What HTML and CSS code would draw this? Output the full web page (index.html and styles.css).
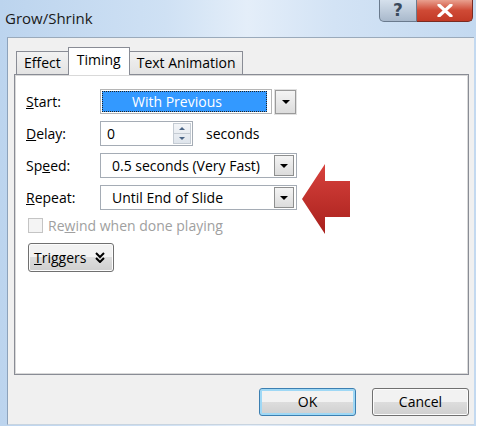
FILE: index.html
```html
<!DOCTYPE html>
<html lang="en">
    <head>
        <meta charset="UTF-8" />
        <title>Grow/Shrink</title>
        <link rel="stylesheet" href="styles.css">
    </head>
    <body>
        <div class="window">
            <div class="titlebar">
                <span class="title">Grow/Shrink</span>
                <div class="caption">
                    <div class="cap-help">?</div>
                    <div class="cap-close">
                        <svg width="16" height="13" viewBox="0 0 16 13">
                            <path d="M2 1 L14 12 M14 1 L2 12" stroke="#fff" stroke-width="3.2" stroke-linecap="round"/>
                        </svg>
                    </div>
                </div>
            </div>
            <div class="client">
                <div class="tabs">
                    <div class="tab">Effect</div>
                    <div class="tab active">Timing</div>
                    <div class="tab">Text Animation</div>
                </div>
                <div class="panel">
                    <div class="row">
                        <span class="label"><u>S</u>tart:</span>
                        <div class="combo focused">
                            <span class="value"><span class="sel">With Previous</span></span>
                            <span class="drop"><i></i></span>
                        </div>
                    </div>
                    <div class="row">
                        <span class="label"><u>D</u>elay:</span>
                        <div class="spin">
                            <span class="value">0</span>
                            <span class="arrows">
                                <span class="up"><i></i></span>
                                <span class="down"><i></i></span>
                            </span>
                        </div>
                        <span class="unit">seconds</span>
                    </div>
                    <div class="row">
                        <span class="label">Sp<u>e</u>ed:</span>
                        <div class="combo">
                            <span class="value">0.5 seconds (Very Fast)</span>
                            <span class="drop"><i></i></span>
                        </div>
                    </div>
                    <div class="row">
                        <span class="label"><u>R</u>epeat:</span>
                        <div class="combo">
                            <span class="value">Until End of Slide</span>
                            <span class="drop"><i></i></span>
                        </div>
                    </div>
                    <div class="check">
                        <span class="box"></span>
                        <span>Re<u>w</u>ind when done playing</span>
                    </div>
                    <div class="triggers">
                        <span><u>T</u>riggers</span>
                        <svg width="10" height="11" viewBox="0 0 10 11">
                            <path d="M1 1 L5 5 L9 1 M1 6 L5 10 L9 6" fill="none" stroke="#000" stroke-width="2"/>
                        </svg>
                    </div>

                    <svg class="arrow" width="50" height="70" viewBox="0 0 50 70">
                        <defs>
                            <linearGradient id="ar" x1="0" y1="0" x2="0" y2="1">
                                <stop offset="0" stop-color="#d8423d"/>
                                <stop offset="1" stop-color="#a8201c"/>
                            </linearGradient>
                        </defs>
                        <path d="M0 35 L23 0 L23 17 L48 17 L48 53 L23 53 L23 70 Z" fill="url(#ar)"/>
                    </svg>
                </div>
                <div class="footer">
                    <div class="btn default">OK</div>
                    <div class="btn">Cancel</div>
                </div>
            </div>
        </div>
    </body>
</html>
```

FILE: styles.css
```css
body {
    margin: 0;
    background: #fff;
    font-family: "Open Sans", "Noto Sans", sans-serif;
    font-size: 14px;
    color: #000;
}
.window {
    width: 476px;
    height: 426px;
    display: flex;
    flex-direction: column;
    background: linear-gradient(90deg, #bcd4ee 0%, #cfe1f4 35%, #e4eef9 52%, #d3e3f5 70%, #c3d9f0 100%);
}
.titlebar {
    height: 37px;
    display: flex;
    justify-content: space-between;
    flex-shrink: 0;
}
.title {
    font-size: 15px;
    padding: 8px 0 0 5px;
    color: #1a1a1a;
}
.caption {
    display: flex;
    height: 22px;
    margin-right: 3px;
}
.cap-help {
    width: 36px;
    border: 1px solid #6a7a8d;
    border-top: none;
    border-radius: 0 0 0 5px;
    background: linear-gradient(#d5e0ec, #a9b9cc);
    color: #3b4a5c;
    font: bold 17px "DejaVu Sans", sans-serif;
    text-align: center;
    line-height: 20px;
}
.cap-close {
    width: 55px;
    border: 1px solid #7a2b22;
    border-top: none;
    border-left: none;
    border-radius: 0 0 5px 0;
    background: linear-gradient(#e9a08f, #cf4a35 50%, #c23a26);
    display: flex;
    align-items: center;
    justify-content: center;
}
.client {
    flex: 1;
    margin: 0 2px 1px 7px;
    background: #f0f0f0;
    border-top: 1px solid #9aaabb;
    border-left: 1px solid #8da2bb;
    border-bottom: 1px solid #c8d4e0;
    padding: 9px 5px 0 6px;
    display: flex;
    flex-direction: column;
}
.tabs {
    display: flex;
    align-items: flex-end;
    padding-left: 2px;
    height: 27px;
    position: relative;
    z-index: 1;
}
.tab {
    height: 22px;
    line-height: 22px;
    padding: 0 7px;
    border: 1px solid #898c95;
    border-bottom: none;
    background: linear-gradient(#f2f2f2, #e3e3e3);
    margin-right: -1px;
}
.tab.active {
    height: 27px;
    line-height: 24px;
    background: #fff;
    padding: 0 8px;
    margin-bottom: -1px;
}
.panel {
    position: relative;
    box-sizing: border-box;
    height: 301px;
    background: #fff;
    border: 1px solid #898c95;
    box-shadow: inset 0 0 0 1px #d9d9d9;
    padding: 14px 0 0 11px;
    display: flex;
    flex-direction: column;
    gap: 7px;
}
.row {
    display: flex;
    align-items: center;
    height: 25px;
}
.label {
    width: 74px;
}
.combo {
    width: 197px;
    height: 25px;
    box-sizing: border-box;
    border: 1px solid #a5acb5;
    display: flex;
    align-items: center;
    padding: 1px;
    background: #fff;
}
.combo .value {
    flex: 1;
    padding-left: 10px;
}
.combo.focused {
    width: 172px;
    border-color: #b5b5b5;
}
.combo.focused .value {
    height: 100%;
    padding: 0;
    display: flex;
}
.sel {
    flex: 1;
    background: #3399ff;
    color: #fff;
    outline: 1px dotted #222;
    outline-offset: -1px;
    padding-left: 30px;
    line-height: 21px;
    margin: 0 2px 0 0;
}
.drop {
    width: 18px;
    height: 19px;
    margin-right: 1px;
    border: 1px solid #8e8f8f;
    background: linear-gradient(#f4f4f4, #dcdcdc);
    display: flex;
    align-items: center;
    justify-content: center;
}
.combo.focused .drop {
    margin-right: -26px;
    margin-left: 6px;
    width: 19px;
    height: 22px;
    border-color: #9a9a9a;
    box-shadow: 0 0 0 1px #e0e0e0;
}
.drop i {
    border-left: 4px solid transparent;
    border-right: 4px solid transparent;
    border-top: 4px solid #000;
}
.spin {
    width: 93px;
    height: 25px;
    box-sizing: border-box;
    border: 1px solid #a5acb5;
    display: flex;
    align-items: center;
    padding: 1px;
}
.spin .value {
    flex: 1;
    padding-left: 5px;
}
.arrows {
    width: 18px;
    height: 21px;
    display: flex;
    flex-direction: column;
    border: 1px solid #c4cbd3;
    box-sizing: border-box;
    background: linear-gradient(#f3f5f8, #dfe5ec);
}
.arrows span {
    flex: 1;
    display: flex;
    align-items: center;
    justify-content: center;
}
.arrows .up {
    border-bottom: 1px solid #c4cbd3;
}
.arrows .up i {
    border-left: 3px solid transparent;
    border-right: 3px solid transparent;
    border-bottom: 3px solid #4b6585;
}
.arrows .down i {
    border-left: 3px solid transparent;
    border-right: 3px solid transparent;
    border-top: 3px solid #4b6585;
}
.unit {
    margin-left: 13px;
}
.check {
    display: flex;
    align-items: center;
    gap: 5px;
    color: #a0a0a0;
    margin-left: 2px;
    height: 17px;
    margin-top: 0;
}
.check .box {
    width: 13px;
    height: 13px;
    border: 1px solid #c4c4c4;
    background: #f4f4f4;
}
.triggers {
    align-self: flex-start;
    margin: 2px 0 0 2px;
    height: 27px;
    padding: 0 8px 0 5px;
    border: 1px solid #707070;
    border-radius: 3px;
    background: linear-gradient(#f2f2f2 50%, #dddddd 50%, #cfcfcf);
    box-shadow: inset 0 0 0 1px #fcfcfc;
    display: flex;
    align-items: center;
    gap: 9px;
}
.arrow {
    position: absolute;
    left: 287px;
    top: 89px;
}
.footer {
    display: flex;
    justify-content: flex-end;
    gap: 16px;
    padding: 13px 0 0 0;
}
.btn {
    width: 95px;
    height: 26px;
    line-height: 25px;
    text-align: center;
    border: 1px solid #707070;
    border-radius: 3px;
    background: linear-gradient(#f2f2f2 50%, #dddddd 50%, #cfcfcf);
    box-shadow: inset 0 0 0 1px #fcfcfc;
}
.btn.default {
    border-color: #3c7fb1;
    box-shadow: inset 0 0 0 2px #9fd8f5;
}
```
